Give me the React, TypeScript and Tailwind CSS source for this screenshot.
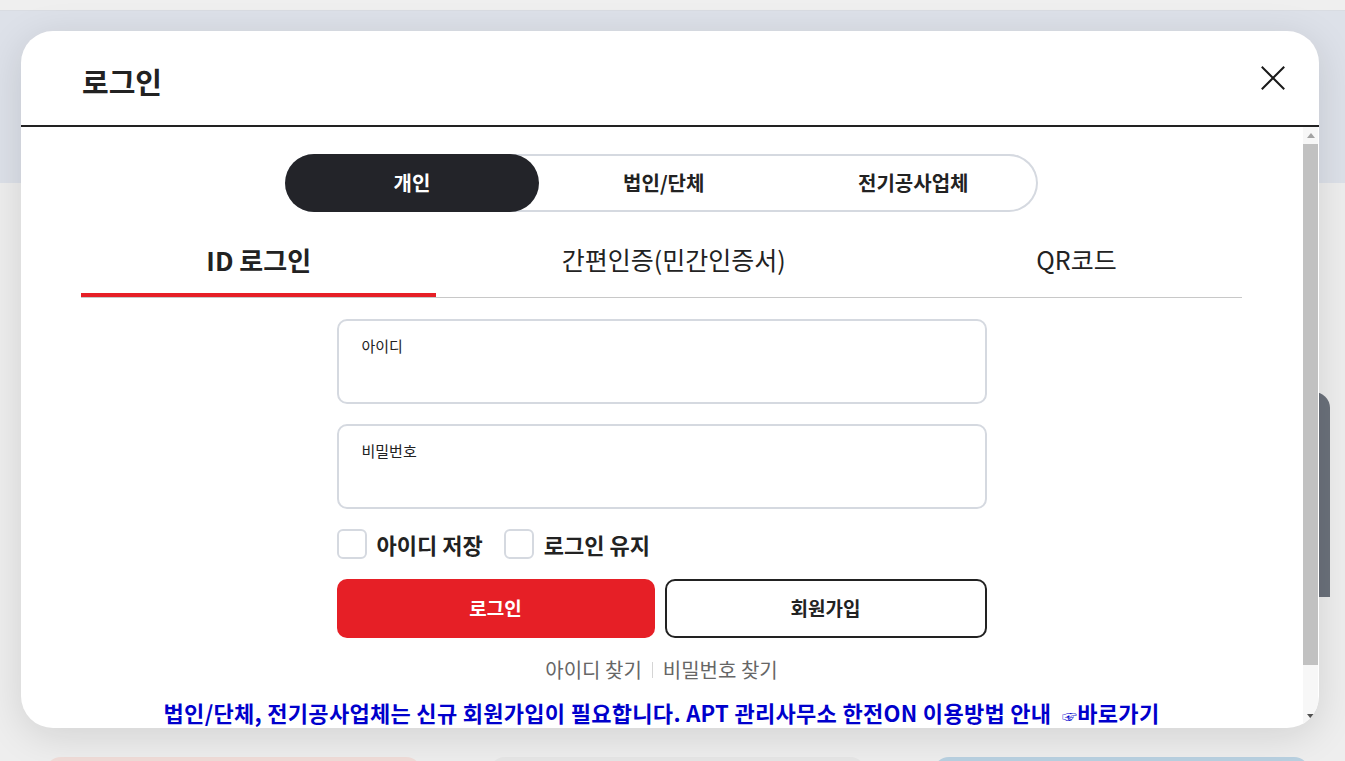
import { useState } from "react";

const font = "font-['Noto_Sans_CJK_KR','Noto_Sans',sans-serif]";

function CloseIcon() {
  return (
    <svg width="24" height="24" viewBox="0 0 24 24" fill="none" stroke="#1a1a1a" strokeWidth="2" strokeLinecap="square">
      <path d="M1.5 1.5 22.5 22.5M22.5 1.5 1.5 22.5" />
    </svg>
  );
}

function Field({ label }: { label: string }) {
  return (
    <div className="w-[650px] h-[85px] mx-auto rounded-[10px] border-2 border-[#d5d9e0] px-[23px] pt-[15px]">
      <div className="text-[15px] text-[#222] leading-[20px]">{label}</div>
    </div>
  );
}

function Check({ label }: { label: string }) {
  return (
    <label className="flex items-center gap-[10px]">
      <span className="w-[30px] h-[30px] rounded-[6px] border-2 border-[#d5d9e0] bg-white" />
      <span className="text-[22px] font-bold text-[#222] leading-[30px]">{label}</span>
    </label>
  );
}

function Scrollbar() {
  return (
    <div className="w-[15px] mr-[1px] shrink-0 flex flex-col bg-[#f7f7f7]">
      <div className="h-[16px] flex items-center justify-center">
        <svg width="8" height="5" viewBox="0 0 8 5">
          <path d="M0 5 4 0 8 5Z" fill="#a3a3a3" />
        </svg>
      </div>
      <div className="flex-1 pt-px">
        <div className="h-[521px] bg-[#c1c1c1]" />
      </div>
      <div className="h-[20px] pb-[3px] flex items-center justify-center">
        <svg width="8" height="5" viewBox="0 0 8 5">
          <path d="M0 0 8 0 4 5Z" fill="#505050" />
        </svg>
      </div>
    </div>
  );
}

export default function App() {
  const [seg, setSeg] = useState(0);
  const [tab, setTab] = useState(0);
  const segs = ["개인", "법인/단체", "전기공사업체"];
  const tabs = ["ID 로그인", "간편인증(민간인증서)", "QR코드"];

  return (
    <div className={`relative h-[761px] overflow-hidden bg-[#eeeeee] ${font}`}>
      {/* page behind the dialog */}
      <div className="h-[11px] bg-[#efefef] border-b border-[#d9dce2]" />
      <div className="h-[172px] bg-[#dde1e9]" />
      <div className="flex justify-end pr-[15px] pt-[209px]">
        <div className="w-[320px] h-[205px] rounded-tr-[16px] bg-[#6b717b]" />
      </div>
      <div className="flex gap-[67px] pl-[45px] mt-[160px]">
        <div className="w-[377px] h-[200px] rounded-t-[16px] bg-[#f0dcd8]" />
        <div className="w-[377px] h-[200px] rounded-t-[16px] bg-[#e6e6e6]" />
        <div className="w-[377px] h-[200px] rounded-t-[16px] bg-[#b9d1e1]" />
      </div>

      {/* dialog */}
      <div className="absolute left-[21px] top-[31px] w-[1298px] h-[697px] rounded-[32px] bg-white shadow-[0_8px_40px_rgba(0,0,0,0.12)] flex flex-col overflow-hidden">
        <div className="h-[96px] shrink-0 border-b-2 border-[#222] flex items-center justify-between pl-[61px] pr-[34px]">
          <h2 className="pt-[8px] text-[29px] font-bold text-[#222]">로그인</h2>
          <button className="w-[24px] h-[24px]">
            <CloseIcon />
          </button>
        </div>

        <div className="flex-1 min-h-0 flex">
          <div className="flex-1 overflow-hidden pl-[60px] pr-[61px]">
            <div className="mt-[27px] mx-auto w-[753px] h-[58px] rounded-full shadow-[inset_0_0_0_2px_#d5d9e0] grid grid-cols-[254px_1fr_1fr]">
              {segs.map((s, i) => (
                <button
                  key={s}
                  onClick={() => setSeg(i)}
                  className={`h-full rounded-full text-[20px] font-bold ${
                    seg === i ? "bg-[#232429] text-white" : "text-[#222]"
                  }`}
                >
                  {s}
                </button>
              ))}
            </div>

            <div className="mt-[18px] flex border-b border-[#c8c8c8]">
              {tabs.map((t, i) => (
                <button
                  key={t}
                  onClick={() => setTab(i)}
                  className={`flex-auto h-[67px] pb-[8px] flex items-center justify-center ${
                    tab === i
                      ? "text-[26px] font-bold text-[#222] shadow-[inset_0_-4px_0_#e61f26]"
                      : "text-[25px] text-[#222]"
                  }`}
                >
                  {t}
                </button>
              ))}
            </div>

            <div className="mt-[21px] flex flex-col gap-[20px]">
              <Field label="아이디" />
              <Field label="비밀번호" />
            </div>

            <div className="w-[650px] mx-auto mt-[20px] flex gap-[21px]">
              <Check label="아이디 저장" />
              <Check label="로그인 유지" />
            </div>

            <div className="w-[650px] mx-auto mt-[20px] flex gap-[10px]">
              <button className="flex-1 h-[59px] rounded-[10px] bg-[#e61f26] text-white text-[19px] font-bold">로그인</button>
              <button className="flex-1 h-[59px] rounded-[10px] border-2 border-[#222] bg-white text-[#222] text-[19px] font-bold">
                회원가입
              </button>
            </div>

            <div className="mt-[19px] flex items-center justify-center text-[20px] text-[#666] leading-[26px]">
              <a>아이디 찾기</a>
              <span className="mx-[10px] w-px h-[16px] bg-[#d5d5d5]" />
              <a>비밀번호 찾기</a>
            </div>

            <p className="mt-[15px] text-center text-[22px] tracking-[0.3px] font-bold text-[#0000cc] leading-[28px] whitespace-nowrap">
              법인/단체, 전기공사업체는 신규 회원가입이 필요합니다. APT 관리사무소 한전ON 이용방법 안내&nbsp;&nbsp;
              <span className="text-[15px] font-normal">☞</span>바로가기
            </p>
          </div>
          <Scrollbar />
        </div>
      </div>
    </div>
  );
}
